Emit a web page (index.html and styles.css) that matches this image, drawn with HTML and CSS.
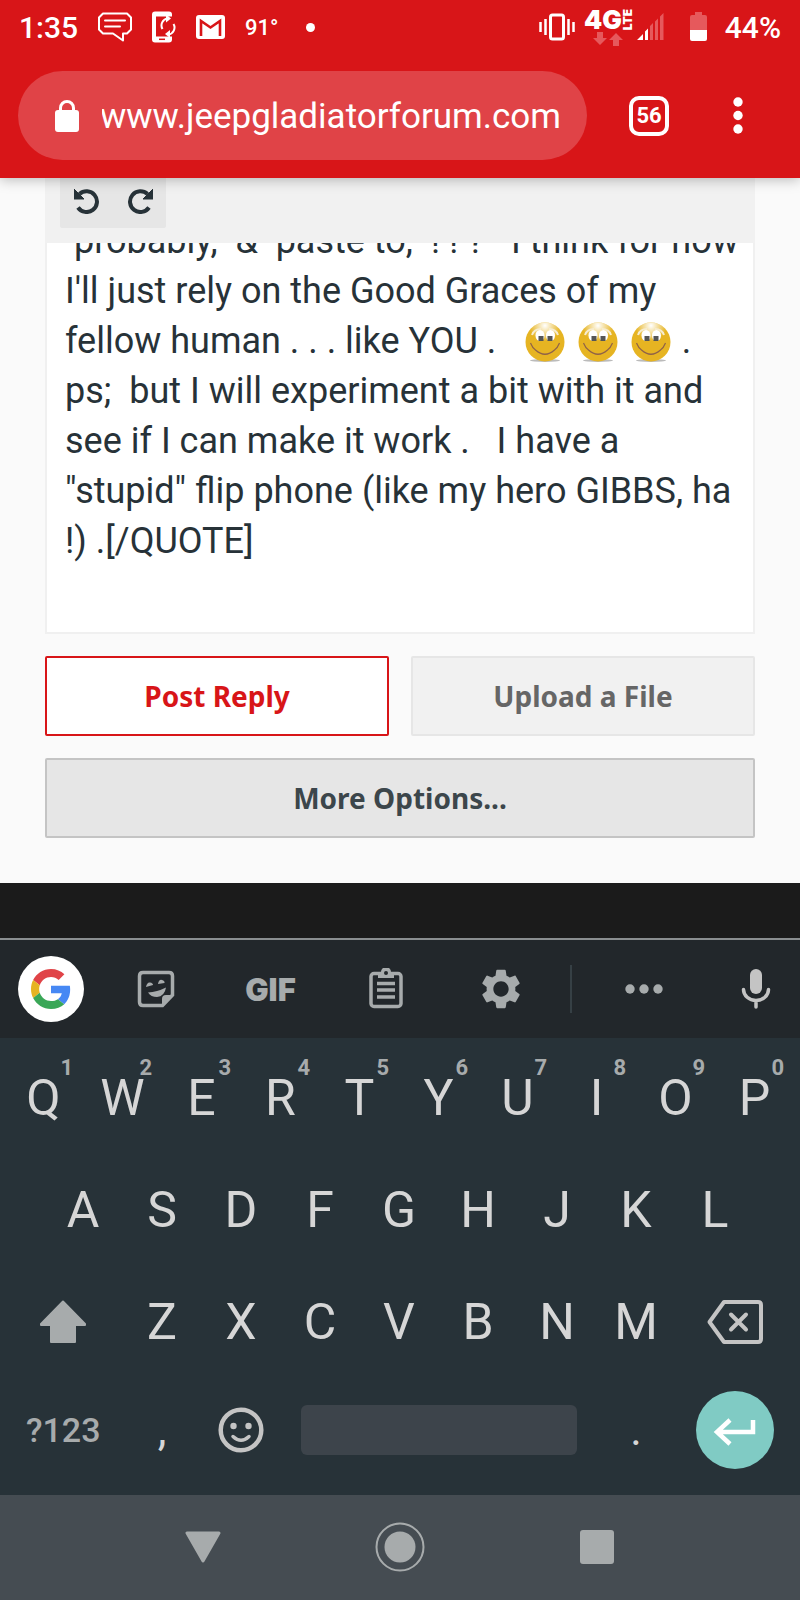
FILE: index.html
```html
<!DOCTYPE html>
<html lang="en">
<head>
    <meta charset="UTF-8">
    <meta name="viewport" content="width=device-width, initial-scale=1.0">
    <title>Jeep Gladiator Forum - Reply</title>
    <link rel="stylesheet" href="styles.css">
</head>
<body>
    <header class="browser">
        <div class="status-bar">
            <div class="status-left">
                <span class="clock">1:35</span>
                <svg width="34" height="30" viewBox="0 0 34 30" fill="none" stroke="#fff" stroke-width="2">
                    <path d="M5 1.500h24l4 4v12l-4 4h-4v7l-10-7H5l-4-4v-12z" stroke-linejoin="round"/>
                    <path d="M7 8.500h20M7 14.500h15" stroke-linecap="round"/>
                </svg>
                <svg width="24" height="32" viewBox="0 0 24 32">
                    <path d="M3 0.500h14q3 0 3 3v2h-16v20h16v3q0 3-3 3h-14q-3 0-3-3v-25q0-3 3-3z" fill="#fff"/>
                    <path d="M7 28.300h6" stroke="#d81518" stroke-width="1.500"/>
                    <path d="M10.500 18a7 7 0 0 1 5-10.500M21.500 13a7 7 0 0 1-5 10.500" fill="none" stroke="#fff" stroke-width="2"/>
                    <path d="M14 3.500l5 4-5 4zM18 19l-5 4 5 4z" fill="#fff"/>
                </svg>
                <svg width="29" height="24" viewBox="0 0 29 24">
                    <rect width="29" height="24" rx="3" fill="#fff"/>
                    <path d="M5 21V6l9.500 6.500L24 6v15" fill="none" stroke="#d81518" stroke-width="2.600"/>
                </svg>
                <span class="temp">91°</span>
                <span class="more-dot"></span>
            </div>
            <div class="status-right">
                <svg width="36" height="28" viewBox="0 0 36 28" fill="none" stroke="#fff">
                    <rect x="11.500" y="2" width="13" height="24" rx="2" stroke-width="3"/>
                    <path d="M1.500 9v10M34.500 9v10" stroke-width="2.500"/>
                    <path d="M6.500 6v16M29.500 6v16" stroke-width="2.500"/>
                </svg>
                <div class="network">
                    <div class="network-type">
                        <span>4G</span>
                        <span class="lte">LTE</span>
                    </div>
                    <svg width="32" height="14" viewBox="0 0 32 14" fill="#e6595c">
                        <path d="M4 0h6v6h4l-7 7-7-7h4zM20 14h6V8h4l-7-7-7 7h4z"/>
                    </svg>
                </div>
                <svg class="signal" width="28" height="28" viewBox="0 0 28 28">
                    <path d="M0 27l6-6v6zM8 18.500l3-3V27H8z" fill="#fff"/>
                    <path d="M13 13l3-3v17h-3zM18 8.500l3-3V27h-3zM23 3.500l3.500-3.500v27H23z" fill="#e6595c"/>
                </svg>
                <svg class="battery" width="17" height="30" viewBox="0 0 17 30">
                    <path d="M5 0h7v3h3q2 0 2 2v13H0V5q0-2 2-2h3z" fill="#e6595c"/>
                    <path d="M0 18h17v9q0 2-2 2H2q-2 0-2-2z" fill="#fff"/>
                </svg>
                <span class="clock">44%</span>
            </div>
        </div>
        <div class="url-bar">
            <div class="address">
                <svg width="24" height="32" viewBox="0 0 24 32">
                    <rect y="10" width="24" height="22" rx="3" fill="#fff"/>
                    <path d="M5.500 11V8a6.500 6.500 0 0 1 13 0v3" fill="none" stroke="#fff" stroke-width="3"/>
                </svg>
                <input type="text" aria-label="Address" value="www.jeepgladiatorforum.com">
            </div>
            <button class="tabs" aria-label="Tabs">56</button>
            <button class="menu" aria-label="Menu">
                <svg width="10" height="38" viewBox="0 0 10 38" fill="#fff">
                    <circle cx="5" cy="5" r="4.700"/><circle cx="5" cy="18.500" r="4.700"/><circle cx="5" cy="32" r="4.700"/>
                </svg>
            </button>
        </div>
    </header>

    <main class="page">
        <!-- shared emoticon -->
        <svg class="defs" width="0" height="0">
            <defs>
                <radialGradient id="shine" cx=".5" cy=".08" r=".4">
                    <stop offset="0" stop-color="#fff"/>
                    <stop offset="1" stop-color="#fff" stop-opacity="0"/>
                </radialGradient>
            </defs>
            <symbol id="smiley" viewBox="0 0 40 40">
                <ellipse cx="20" cy="38.500" rx="15" ry="1.500" fill="#bbb"/>
                <circle cx="20" cy="20" r="19.500" fill="#e6b422"/>
                <circle cx="20" cy="20" r="19.500" fill="url(#shine)"/>
                <path d="M7 13q2-6 9-6M33 13q-2-6-9-6" fill="none" stroke="#f6ecd0" stroke-width="2"/>
                <ellipse cx="15" cy="13.500" rx="4.500" ry="5.500" fill="#fff"/>
                <ellipse cx="25.500" cy="13.500" rx="4.500" ry="5.500" fill="#fff"/>
                <rect x="13.500" y="14" width="5" height="5" fill="#555"/>
                <rect x="22.500" y="14" width="5" height="5" fill="#555"/>
                <path d="M5.500 21q2 5 5 7q9.500 8.500 19 0q3-2 5-7" fill="none" stroke="#8f6248" stroke-width="1.200"/>
            </symbol>
        </svg>

        <form class="reply">
            <div class="editor-tools">
                <div class="history">
                    <button type="button" aria-label="Undo">
                        <svg width="26" height="26" viewBox="0 0 26 26">
                            <path d="M4 19.500A10.400 10.400 0 1 0 5.500 6" fill="none" stroke="#273238" stroke-width="4"/>
                            <path d="M0 1v10h10z" fill="#273238" stroke="#273238" stroke-linejoin="round"/>
                        </svg>
                    </button>
                    <button type="button" aria-label="Redo">
                        <svg width="26" height="26" viewBox="0 0 26 26">
                            <path d="M22 19.500A10.400 10.400 0 1 1 20.500 6" fill="none" stroke="#273238" stroke-width="4"/>
                            <path d="M26 1v10h-10z" fill="#273238" stroke="#273238" stroke-linejoin="round"/>
                        </svg>
                    </button>
                </div>
            </div>
            <div class="editor" role="textbox" aria-label="Message" contenteditable="true">
                <div class="message"> probably,  &amp;  paste to,  ! ! ?   I think for now
I'll just rely on the Good Graces of my
fellow human . . . like YOU .   <svg class="smiley"><use href="#smiley"/></svg> <svg class="smiley"><use href="#smiley"/></svg> <svg class="smiley"><use href="#smiley"/></svg> .
ps;  but I will experiment a bit with it and
see if I can make it work .   I have a
"stupid" flip phone (like my hero GIBBS, ha
!) .[/QUOTE]</div>
            </div>
            <div class="actions">
                <button type="button" class="btn btn-primary">Post Reply</button>
                <button type="button" class="btn btn-upload">Upload a File</button>
                <button type="button" class="btn btn-more">More Options...</button>
            </div>
        </form>
    </main>

    <section class="keyboard">
        <div class="suggestions">
            <button class="google" aria-label="Google">
                <svg width="40" height="40" viewBox="0 0 48 48">
                    <path fill="#e04347" d="M24 9.500c3.540 0 6.710 1.220 9.210 3.600l6.850-6.850C35.900 2.380 30.470 0 24 0 14.620 0 6.510 5.380 2.560 13.220l7.980 6.190C12.430 13.720 17.740 9.500 24 9.500z"/>
                    <path fill="#4688f4" d="M46.980 24.550c0-1.570-.15-3.090-.38-4.550H24v9.020h12.940c-.58 2.960-2.260 5.480-4.780 7.180l7.730 6c4.510-4.180 7.090-10.360 7.090-17.650z"/>
                    <path fill="#e6b422" d="M10.530 28.590c-.48-1.450-.76-2.990-.76-4.590s.27-3.140.76-4.590l-7.980-6.190C.92 16.460 0 20.120 0 24c0 3.880.92 7.540 2.560 10.780l7.970-6.190z"/>
                    <path fill="#3aa757" d="M24 48c6.480 0 11.930-2.130 15.890-5.810l-7.730-6c-2.150 1.450-4.920 2.300-8.160 2.300-6.260 0-11.570-4.220-13.470-9.910l-7.980 6.190C6.510 42.620 14.620 48 24 48z"/>
                </svg>
            </button>
            <button aria-label="Stickers">
                <svg width="38" height="38" viewBox="0 0 38 38">
                    <path d="M6 2.500h26q3.500 0 3.500 3.500v19L25.500 35.500H6Q2.500 35.500 2.500 32V6q0-3.500 3.500-3.500z" fill="none" stroke="#a7abac" stroke-width="3.500"/>
                    <path d="M25 36v-7q0-4 4-4h7z" fill="#a7abac"/>
                    <path d="M9 17q1-5 4-4.500t3 2.500zM21 14q1-5 4-4t2.500 3zM11 22.500q9-.5 18-5q-1.500 9-9 9.500-6 0-9-4.500z" fill="#a7abac"/>
                </svg>
            </button>
            <button class="gif">GIF</button>
            <button aria-label="Clipboard">
                <svg width="34" height="42" viewBox="0 0 34 42">
                    <rect x="2" y="5.500" width="30" height="33" rx="3" fill="none" stroke="#a7abac" stroke-width="3.500"/>
                    <path d="M9 4h3a5 5 0 0 1 10 0h3v6H9z" fill="#a7abac"/>
                    <circle cx="17" cy="5" r="2" fill="#22272b"/>
                    <path d="M8 15.500h18M8 22h18M8 29h18" stroke="#a7abac" stroke-width="3.500"/>
                </svg>
            </button>
            <button aria-label="Settings">
                <svg width="46" height="46" viewBox="0 0 24 24" fill="#a7abac">
                    <path d="M19.430 12.980c.04-.32.07-.64.07-.98s-.03-.66-.07-.98l2.110-1.650c.19-.15.24-.42.12-.64l-2-3.460c-.12-.22-.39-.3-.61-.22l-2.490 1c-.52-.4-1.080-.73-1.690-.98l-.38-2.650C14.460 2.180 14.250 2 14 2h-4c-.25 0-.46.18-.49.42l-.38 2.650c-.61.25-1.170.59-1.690.98l-2.490-1c-.23-.09-.49 0-.61.22l-2 3.460c-.13.22-.07.49.12.64l2.110 1.650c-.04.32-.07.65-.07.98s.03.66.07.98l-2.110 1.650c-.19.15-.24.42-.12.64l2 3.460c.12.22.39.3.61.22l2.490-1c.52.4 1.080.73 1.690.98l.38 2.650c.03.24.24.42.49.42h4c.25 0 .46-.18.49-.42l.38-2.650c.61-.25 1.170-.59 1.690-.98l2.490 1c.23.09.49 0 .61-.22l2-3.460c.12-.22.07-.49-.12-.64l-2.110-1.650zM12 16c-2.200 0-4-1.800-4-4s1.800-4 4-4 4 1.800 4 4-1.800 4-4 4z"/>
                </svg>
            </button>
            <span class="divider"></span>
            <button aria-label="More">
                <svg width="38" height="10" viewBox="0 0 38 10" fill="#a7abac">
                    <circle cx="5" cy="5" r="4.700"/><circle cx="19" cy="5" r="4.700"/><circle cx="33" cy="5" r="4.700"/>
                </svg>
            </button>
            <button aria-label="Voice input">
                <svg width="30" height="40" viewBox="0 0 30 40" fill="none" stroke="#c4c4c4" stroke-width="3.500" stroke-linecap="round">
                    <rect x="9" y="0" width="12" height="25" rx="6" fill="#c4c4c4" stroke="none"/>
                    <path d="M2.500 20.500a12.500 11 0 0 0 25 0M15 32v6"/>
                </svg>
            </button>
        </div>

        <div class="keys">
            <div class="row">
                <button>Q<sup>1</sup></button>
                <button>W<sup>2</sup></button>
                <button>E<sup>3</sup></button>
                <button>R<sup>4</sup></button>
                <button>T<sup>5</sup></button>
                <button>Y<sup>6</sup></button>
                <button>U<sup>7</sup></button>
                <button>I<sup>8</sup></button>
                <button>O<sup>9</sup></button>
                <button>P<sup>0</sup></button>
            </div>
            <div class="row row-home">
                <button>A</button>
                <button>S</button>
                <button>D</button>
                <button>F</button>
                <button>G</button>
                <button>H</button>
                <button>J</button>
                <button>K</button>
                <button>L</button>
            </div>
            <div class="row">
                <button class="wide" aria-label="Shift">
                    <svg width="48" height="44" viewBox="0 0 48 44">
                        <path d="M24 1.500L46 24v1H36v17H12V25H2v-1z" fill="#a7abac" stroke="#a7abac" stroke-width="2" stroke-linejoin="round"/>
                    </svg>
                </button>
                <button>Z</button>
                <button>X</button>
                <button>C</button>
                <button>V</button>
                <button>B</button>
                <button>N</button>
                <button>M</button>
                <button class="wide" aria-label="Backspace">
                    <svg width="56" height="44" viewBox="0 0 56 44" fill="none" stroke="#c4c4c4" stroke-width="4" stroke-linejoin="round" stroke-linecap="round">
                        <path d="M17 2h34q3 0 3 3v34q0 3-3 3H17L2.500 22z"/>
                        <path d="M24 14.500l15 15M39 14.500l-15 15"/>
                    </svg>
                </button>
            </div>
            <div class="row row-bottom">
                <button class="wide symbols">?123</button>
                <button class="punctuation">,</button>
                <button aria-label="Emoji">
                    <svg width="46" height="46" viewBox="0 0 46 46">
                        <circle cx="23" cy="23" r="20.300" fill="none" stroke="#c4c4c4" stroke-width="4.500"/>
                        <circle cx="15.500" cy="19" r="3.200" fill="#c4c4c4"/>
                        <circle cx="30.500" cy="19" r="3.200" fill="#c4c4c4"/>
                        <path d="M15 29.500q8 7.500 16 0" fill="none" stroke="#c4c4c4" stroke-width="3.500" stroke-linecap="round"/>
                    </svg>
                </button>
                <button class="space" aria-label="Space"><span></span></button>
                <button class="punctuation">.</button>
                <button class="wide" aria-label="Enter">
                    <span class="enter">
                        <svg width="44" height="28" viewBox="0 0 44 28" fill="none" stroke="#fff" stroke-width="4.500">
                            <path d="M17 2L4 14l13 12M4 14h36V2"/>
                        </svg>
                    </span>
                </button>
            </div>
        </div>
    </section>

    <nav class="nav-bar">
        <button aria-label="Hide keyboard">
            <svg width="36" height="32" viewBox="0 0 36 32">
                <path d="M2 2h32L18 30z" fill="#a7abac" stroke="#a7abac" stroke-width="3" stroke-linejoin="round"/>
            </svg>
        </button>
        <button aria-label="Home">
            <svg width="50" height="50" viewBox="0 0 50 50">
                <circle cx="25" cy="25" r="23.500" fill="none" stroke="#a7abac" stroke-width="2"/>
                <circle cx="25" cy="25" r="15.500" fill="#a7abac"/>
            </svg>
        </button>
        <button aria-label="Recent apps"><span class="recents"></span></button>
    </nav>
</body>
</html>
```
FILE: styles.css
```css
* {
    box-sizing: border-box;
}

body {
    margin: 0;
    min-height: 100vh;
    display: flex;
    flex-direction: column;
    background-color: #1b1b1b;
    font-family: Roboto, sans-serif;
}

button {
    display: flex;
    align-items: center;
    justify-content: center;
    margin: 0;
    padding: 0;
    border: none;
    background: none;
    color: inherit;
    font: inherit;
    cursor: pointer;
}

svg {
    flex: none;
}

.defs {
    position: absolute;
}

/* Browser header */

.browser {
    position: relative;
    background-color: #d81518;
    color: #fff;
    box-shadow: 0 2px 12px rgba(0, 0, 0, 0.25);
}

.status-bar {
    display: flex;
    justify-content: space-between;
    height: 54px;
    padding: 0 19px;
}

.status-left,
.status-right {
    display: flex;
    align-items: center;
}

.status-left {
    gap: 20px;
}

.clock {
    font-size: 30px;
    font-weight: 500;
}

.temp {
    font-size: 22px;
    font-weight: 500;
}

.more-dot {
    width: 9px;
    height: 9px;
    margin-left: 8px;
    border-radius: 50%;
    background-color: #fff;
}

.network {
    margin-left: 9px;
}

.network svg {
    display: block;
    margin-left: 9px;
}

.network-type {
    display: flex;
    align-items: center;
    height: 24px;
    font-family: Inter, sans-serif;
    font-size: 26px;
    font-weight: 900;
    line-height: 22px;
}

.lte {
    writing-mode: vertical-rl;
    transform: rotate(180deg);
    font-size: 12px;
    font-weight: 900;
    line-height: 12px;
}

.signal {
    margin-left: 3px;
}

.battery {
    margin: 0 18px 0 25px;
}

.url-bar {
    display: flex;
    align-items: center;
    padding: 17px 57px 18px 18px;
}

.address {
    display: flex;
    align-items: center;
    flex: 1;
    gap: 23px;
    height: 89px;
    padding: 0 20px 0 37px;
    border-radius: 45px;
    background-color: #e04347;
}

.address input {
    flex: 1;
    min-width: 0;
    padding: 2px 0 0;
    border: none;
    outline: none;
    background: none;
    color: #fff;
    font-family: inherit;
    font-size: 35px;
    text-indent: -2px;
}

.tabs {
    width: 40px;
    height: 40px;
    margin: 0 64px 0 42px;
    border: 4px solid #fff;
    border-radius: 10px;
    font-size: 22px;
    font-weight: 700;
}

/* Reply form */

.page {
    flex: 1;
    margin-bottom: 55px;
    background-color: #fafafa;
}

.reply {
    padding: 0 45px 44px;
}

.editor-tools {
    height: 65px;
    padding: 0 15px;
    background-color: #f1f1f1;
}

.history {
    display: inline-flex;
    height: 50px;
    padding-bottom: 4px;
    border-radius: 0 0 2px 2px;
    background-color: #e6e6e6;
}

.history button {
    width: 53px;
}

.editor {
    height: 391px;
    padding: 0 18px;
    overflow: hidden;
    border: 2px solid #f0f0f0;
    border-top: none;
    background-color: #fff;
    color: #273238;
    outline: none;
}

.message {
    margin-top: -27px;
    font-size: 36px;
    line-height: 50px;
    white-space: pre;
}

.smiley {
    width: 40px;
    height: 40px;
    margin: 0 2px;
    vertical-align: -9px;
}

.actions {
    display: grid;
    grid-template-columns: 1fr 1fr;
    gap: 22px;
    margin-top: 22px;
}

.btn {
    height: 80px;
    border: 2px solid;
    border-radius: 2px;
    font-family: "Noto Sans", sans-serif;
    font-size: 28px;
    font-weight: 700;
}

.btn-primary {
    border-color: #d81518;
    background-color: #fff;
    color: #d81518;
}

.btn-upload {
    border-color: #e6e6e6;
    background-color: #f1f1f1;
    color: #666;
}

.btn-more {
    grid-column: span 2;
    border-color: #c4c4c4;
    background-color: #e6e6e6;
    color: #3c464b;
}

/* Keyboard */

.keyboard {
    border-top: 2px solid #8a8e90;
    background-color: #273238;
    color: #d6d6d6;
}

.suggestions {
    display: grid;
    grid-template-columns: 94fr repeat(4, 115fr) 14fr 144fr 80fr;
    align-items: center;
    height: 98px;
    padding: 0 4px;
    background-color: #22272b;
    color: #a7abac;
}

.google {
    justify-self: center;
    width: 66px;
    height: 66px;
    border-radius: 50%;
    background-color: #fff;
}

.gif {
    font-family: Inter, sans-serif;
    font-size: 31px;
    font-weight: 900;
}

.divider {
    justify-self: end;
    width: 2px;
    height: 48px;
    background-color: #364045;
}

.keys {
    padding: 4px 6px 13px 4px;
}

.row {
    display: grid;
    grid-template-columns: repeat(20, 1fr);
    height: 112px;
    font-size: 50px;
}

.row button {
    position: relative;
    grid-column: span 2;
}

.row-home button:first-child {
    grid-column: 2 / span 2;
}

.row .wide {
    grid-column: span 3;
}

.row-bottom {
    height: 104px;
}

.row .space {
    grid-column: span 8;
    padding: 0 20px;
}

.space span {
    flex: 1;
    height: 50px;
    border-radius: 6px;
    background-color: #3d444b;
}

sup {
    position: absolute;
    top: 15px;
    right: 10px;
    color: #a7abac;
    font-size: 22px;
    font-weight: 700;
    line-height: 22px;
}

.row .symbols {
    color: #a7abac;
    font-size: 34px;
    font-weight: 500;
}

.row .punctuation {
    font-size: 44px;
}

.enter {
    display: flex;
    align-items: center;
    justify-content: center;
    width: 78px;
    height: 78px;
    border-radius: 50%;
    background-color: #80cbc4;
    padding-top: 4px;
}

/* Navigation bar */

.nav-bar {
    display: flex;
    justify-content: center;
    height: 105px;
    background-color: #454c52;
}

.nav-bar button {
    flex: 0 1 197px;
    padding-bottom: 2px;
}

.recents {
    width: 34px;
    height: 34px;
    border-radius: 3px;
    background-color: #a7abac;
}
```
